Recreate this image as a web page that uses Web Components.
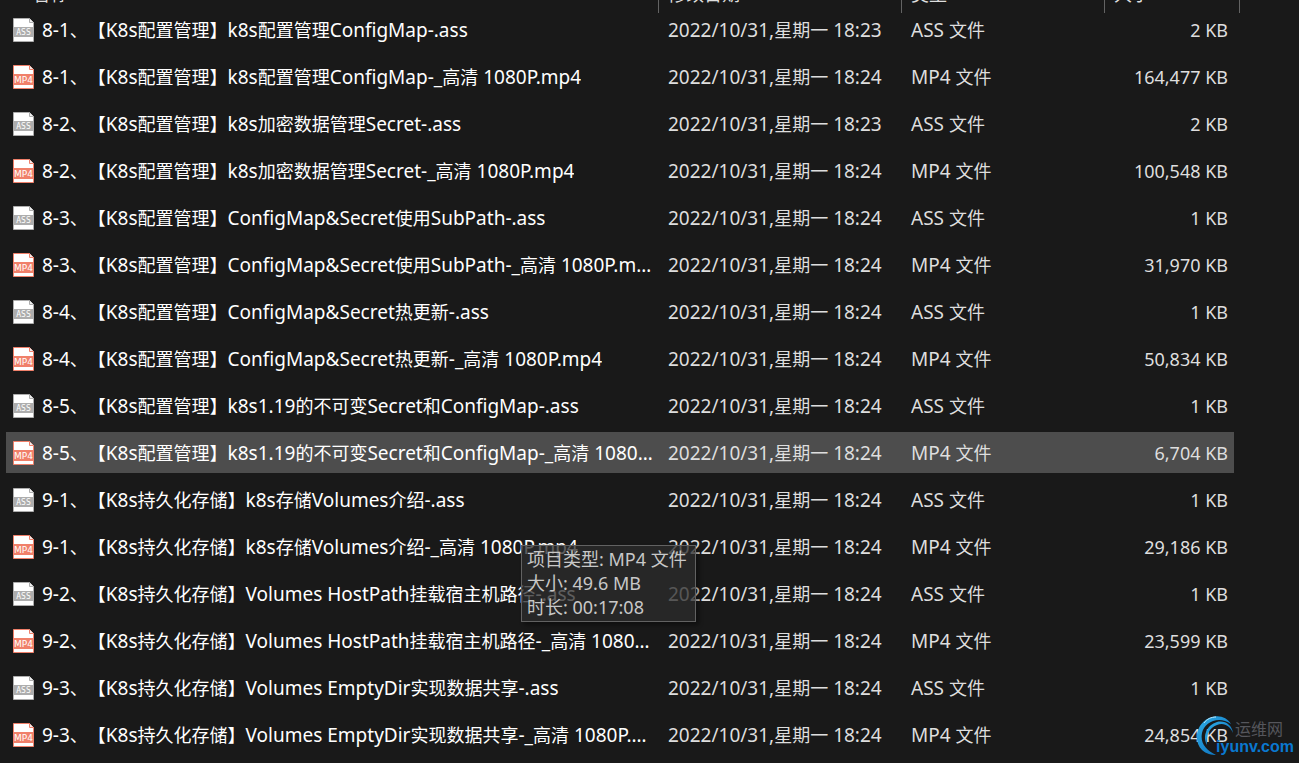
<!DOCTYPE html>
<html lang="zh-CN">
<head>
<meta charset="utf-8">
<title>K8s</title>
<style>
  html, body {
    margin: 0;
    height: 100%;
    overflow: hidden;
    background: #191919;
    color: #dedede;
    font: 18px/24px "Noto Sans", "Noto Sans CJK SC", sans-serif;
    text-spacing-trim: space-all;
  }
</style>
</head>
<body>
<file-list>
  <info-tip slot="tip">
    <div>项目类型: MP4 文件</div>
    <div>大小: 49.6 MB</div>
    <div>时长: 00:17:08</div>
  </info-tip>
</file-list>
<site-mark>
  <span slot="name">运维网</span>
  <span slot="domain">iyunv.com</span>
</site-mark>

<script>
class FileIcon extends HTMLElement {
  constructor() {
    super();
    this.shadowDOM = this.attachShadow({mode: 'open'});
  }
  connectedCallback() {
    this.render();
  }
  render() {
    const kind = this.getAttribute('kind');
    const mp4 = kind === 'MP4';
    const color = mp4 ? '#f0806a' : '#adadad';
    this.shadowDOM.innerHTML = `
      <style>
        :host { display: block; flex: none; width: 21px; height: 24px; }
        svg { display: block; }
        text { fill: #fff; text-anchor: middle; }
        .ASS { font: 8px "DejaVu Sans Mono", monospace; }
        .MP4 { font: 9px "DejaVu Sans", sans-serif; }
      </style>
      <svg width="21" height="24" viewBox="0 0 21 24" aria-hidden="true">
        <path d="M.5 .5H16.5L20.5 4.5V23.5H.5Z" fill="#fff" stroke="${color}"/>
        <path d="M16.5 .5V4.5H20.5" fill="#eee" stroke="${color}"/>
        <path d="M0 9H21V${mp4 ? 20 : 19}H0Z" fill="${color}"/>
        <text class="${kind}" x="10.5" y="${mp4 ? 18 : 17}">${kind}</text>
      </svg>`;
  }
}
customElements.define('file-icon', FileIcon);

const files = [
  ['8-1、【K8s配置管理】k8s配置管理ConfigMap-.ass', '18:23', '2 KB'],
  ['8-1、【K8s配置管理】k8s配置管理ConfigMap-_高清 1080P.mp4', '18:24', '164,477 KB'],
  ['8-2、【K8s配置管理】k8s加密数据管理Secret-.ass', '18:23', '2 KB'],
  ['8-2、【K8s配置管理】k8s加密数据管理Secret-_高清 1080P.mp4', '18:24', '100,548 KB'],
  ['8-3、【K8s配置管理】ConfigMap&amp;Secret使用SubPath-.ass', '18:24', '1 KB'],
  ['8-3、【K8s配置管理】ConfigMap&amp;Secret使用SubPath-_高清 1080P.mp4', '18:24', '31,970 KB'],
  ['8-4、【K8s配置管理】ConfigMap&amp;Secret热更新-.ass', '18:24', '1 KB'],
  ['8-4、【K8s配置管理】ConfigMap&amp;Secret热更新-_高清 1080P.mp4', '18:24', '50,834 KB'],
  ['8-5、【K8s配置管理】k8s1.19的不可变Secret和ConfigMap-.ass', '18:24', '1 KB'],
  ['8-5、【K8s配置管理】k8s1.19的不可变Secret和ConfigMap-_高清 1080P.mp4', '18:24', '6,704 KB'],
  ['9-1、【K8s持久化存储】k8s存储Volumes介绍-.ass', '18:24', '1 KB'],
  ['9-1、【K8s持久化存储】k8s存储Volumes介绍-_高清 1080P.mp4', '18:24', '29,186 KB'],
  ['9-2、【K8s持久化存储】Volumes HostPath挂载宿主机路径-.ass', '18:24', '1 KB'],
  ['9-2、【K8s持久化存储】Volumes HostPath挂载宿主机路径-_高清 1080P.mp4', '18:24', '23,599 KB'],
  ['9-3、【K8s持久化存储】Volumes EmptyDir实现数据共享-.ass', '18:24', '1 KB'],
  ['9-3、【K8s持久化存储】Volumes EmptyDir实现数据共享-_高清 1080P.mp4', '18:24', '24,854 KB']
];
const current = 9;

// Chinese runs are set one pixel smaller than the latin text around them
const mixed = (text) => text.replace(/[\u3000-\u9fff]+/g, '<i>$&</i>');

class FileList extends HTMLElement {
  constructor() {
    super();
    this.shadowDOM = this.attachShadow({mode: 'open'});
  }
  connectedCallback() {
    this.render();
  }
  row([name, time, size], index) {
    const kind = name.endsWith('.mp4') ? 'MP4' : 'ASS';
    return `
      <tr${index === current ? ' class="current"' : ''}>
        <td><div class="name"><file-icon kind="${kind}"></file-icon><span>${mixed(name)}</span></div></td>
        <td>${mixed('2022/10/31,星期一 ' + time)}</td>
        <td>${mixed(kind + ' 文件')}</td>
        <td class="size">${size}</td>
      </tr>`;
  }
  render() {
    this.shadowDOM.innerHTML = `
      <style>
        :host {
          display: block;
          position: relative;
          padding: 0 65px 0 6px;
        }
        table {
          width: 100%;
          table-layout: fixed;
          border-collapse: separate;
          border-spacing: 0;
        }
        .col-date { width: 243px; }
        .col-type { width: 203px; }
        .col-size { width: 130px; }
        th {
          position: relative;
          height: 6px;
          padding: 0 10px;
          font-weight: normal;
          text-align: left;
        }
        th:first-child { padding-left: 26px; }
        /* the header is scrolled almost out of view */
        th div {
          display: flex;
          align-items: flex-end;
          height: 6px;
        }
        th::after {
          content: "";
          position: absolute;
          top: 0;
          right: -1px;
          width: 1px;
          height: 13px;
          background: #636363;
        }
        th:last-child::after { right: -6px; }
        td {
          box-sizing: border-box;
          height: 47px;
          padding: 0 10px;
          border: solid transparent;
          border-width: 3px 0;
          background-clip: padding-box;
          font-size: 19px;
          white-space: nowrap;
        }
        td:first-child { padding: 0 3px 0 7px; }
        i {
          font-size: 18px;
          font-style: normal;
        }
        .current td { background-color: #4d4d4d; }
        .name {
          display: flex;
          align-items: center;
          gap: 8px;
          color: #fff;
        }
        .name span {
          overflow: hidden;
          text-overflow: ellipsis;
        }
        td.size {
          padding-right: 6px;
          font-size: 18px;
          text-align: right;
        }
        ::slotted(info-tip) {
          position: absolute;
          left: 521px;
          top: 545px;
        }
      </style>
      <table>
        <colgroup>
          <col><col class="col-date"><col class="col-type"><col class="col-size">
        </colgroup>
        <thead>
          <tr>
            <th><div>名称</div></th>
            <th><div>修改日期</div></th>
            <th><div>类型</div></th>
            <th><div>大小</div></th>
          </tr>
        </thead>
        <tbody>${files.map((file, i) => this.row(file, i)).join('')}</tbody>
      </table>
      <slot name="tip"></slot>`;
  }
}
customElements.define('file-list', FileList);

class InfoTip extends HTMLElement {
  constructor() {
    super();
    this.shadowDOM = this.attachShadow({mode: 'open'});
  }
  connectedCallback() {
    this.shadowDOM.innerHTML = `
      <style>
        :host {
          display: block;
          padding: 1px 8px 2px 5px;
          border: 1px solid #626262;
          background: rgba(43, 43, 43, .76);
          box-shadow: 3px 3px 4px rgba(0, 0, 0, .4);
          color: #c8c8c8;
          white-space: nowrap;
        }
      </style>
      <slot></slot>`;
  }
}
customElements.define('info-tip', InfoTip);

class SiteMark extends HTMLElement {
  constructor() {
    super();
    this.shadowDOM = this.attachShadow({mode: 'open'});
  }
  connectedCallback() {
    this.shadowDOM.innerHTML = `
      <style>
        :host {
          position: absolute;
          right: 5px;
          bottom: 7px;
          display: flex;
          align-items: flex-end;
        }
        svg {
          position: absolute;
          right: 58px;
          bottom: 0;
        }
        .words {
          position: relative;
          display: flex;
          flex-direction: column;
          align-items: flex-end;
        }
        .name {
          padding-right: 11px;
          color: #55565c;
          font-size: 16px;
          line-height: 18px;
        }
        .domain {
          color: #0a78d0;
          font: bold 16px/18px "Liberation Sans", sans-serif;
        }
      </style>
      <svg width="40" height="42" viewBox="0 0 40 42" aria-hidden="true">
        <defs>
          <linearGradient id="arc" x1="0" y1="0" x2="1" y2="1">
            <stop offset="0" stop-color="#2fb0ea"/>
            <stop offset="1" stop-color="#0866b4"/>
          </linearGradient>
        </defs>
        <path d="M35 10C31 3 22 0 13 4C0 10 -3 27 6 36C10 40 16 41 20 41C10 36 4 29 6 19C8 8 23 1 35 10Z" fill="url(#arc)"/>
        <path d="M37 19C36 11 29 6 21 8C11 11 6 22 11 31C10 21 13 14 21 11C28 8 34 12 37 19Z" fill="url(#arc)"/>
        <path d="M8 9C11 5 15 3 20 3" fill="none" stroke="#bfe8fa"/>
      </svg>
      <div class="words">
        <div class="name"><slot name="name"></slot></div>
        <div class="domain"><slot name="domain"></slot></div>
      </div>`;
  }
}
customElements.define('site-mark', SiteMark);
</script>
</body>
</html>
